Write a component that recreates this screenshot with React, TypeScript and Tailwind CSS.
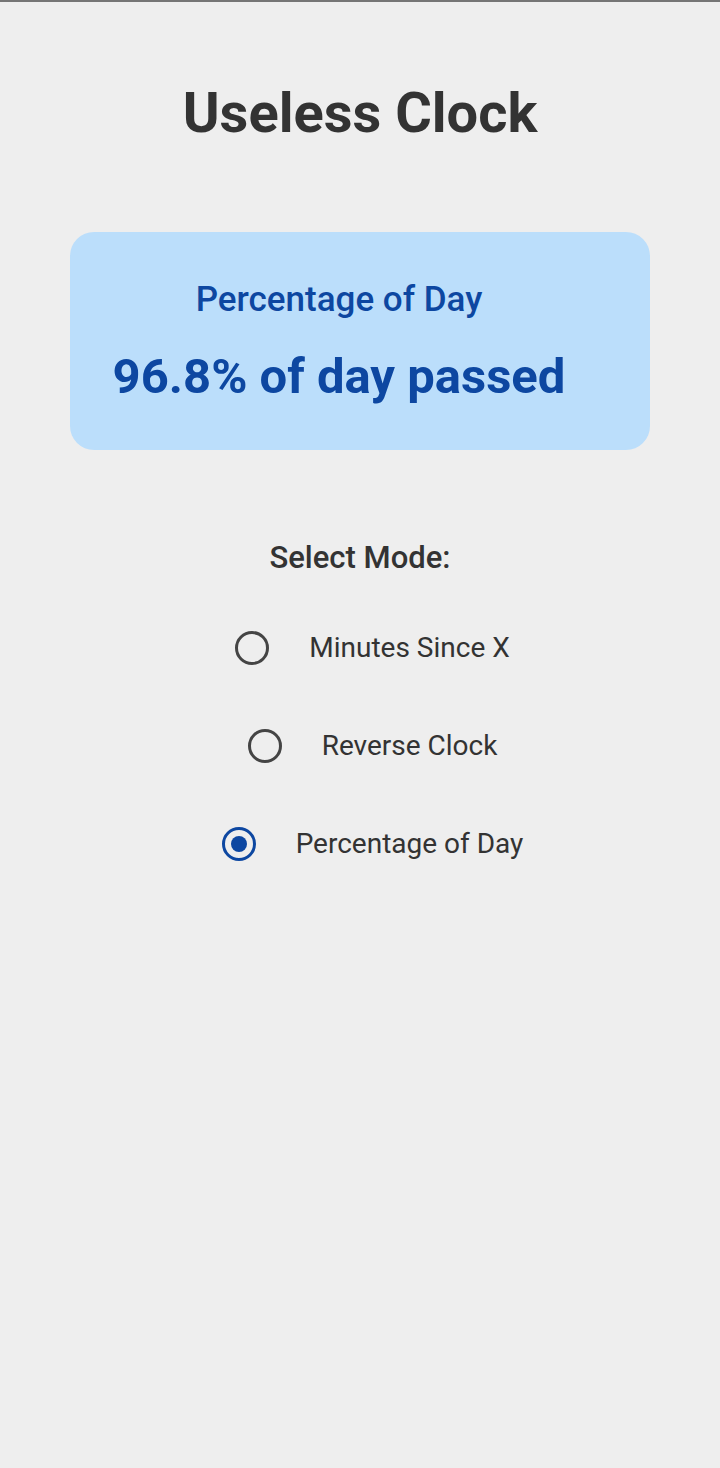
import { useState } from "react";

const MODES = ["Minutes Since X", "Reverse Clock", "Percentage of Day"];

const App = () => {
  const [mode, setMode] = useState<string>("Percentage of Day");

  return (
    <div
      className="min-h-screen bg-[#eeeeee] border-t-2 border-[#757575]"
      style={{ fontFamily: "Roboto, 'Noto Sans', sans-serif" }}
    >
      {/* Title */}
      <div className="pt-[83px] text-center text-[56px] leading-[56px] font-bold text-[#333333]">
        Useless Clock
      </div>

      {/* Result card */}
      <div className="mx-[70px] mt-[91px] h-[218px] rounded-[24px] bg-[#bbdefb] pt-[50px] pr-[42px] flex flex-col items-center text-[#0d47a1]">
        <div className="text-[35px] leading-[35px] font-medium">Percentage of Day</div>
        <div className="mt-[35px] text-[49px] leading-[49px] font-bold">96.8% of day passed</div>
      </div>

      {/* Mode picker */}
      <div className="mt-[92px] text-center text-[31px] leading-[31px] font-medium text-[#333333]">
        Select Mode:
      </div>
      <div className="mt-[51px] flex flex-col items-center gap-[50px]">
        {MODES.map((m) => {
          const selected = mode === m;
          return (
            <button
              key={m}
              onClick={() => setMode(m)}
              className="h-[48px] flex items-center pl-[25px] outline-none"
            >
              <span
                className={`w-[34px] h-[34px] rounded-full border-[3px] flex items-center justify-center ${
                  selected ? "border-[#0d47a1]" : "border-[#444444]"
                }`}
              >
                {selected && <span className="w-[16px] h-[16px] rounded-full bg-[#0d47a1]" />}
              </span>
              <span className="ml-[40px] text-[28px] leading-[28px] text-[#333333]">{m}</span>
            </button>
          );
        })}
      </div>
    </div>
  );
};

export default App;
